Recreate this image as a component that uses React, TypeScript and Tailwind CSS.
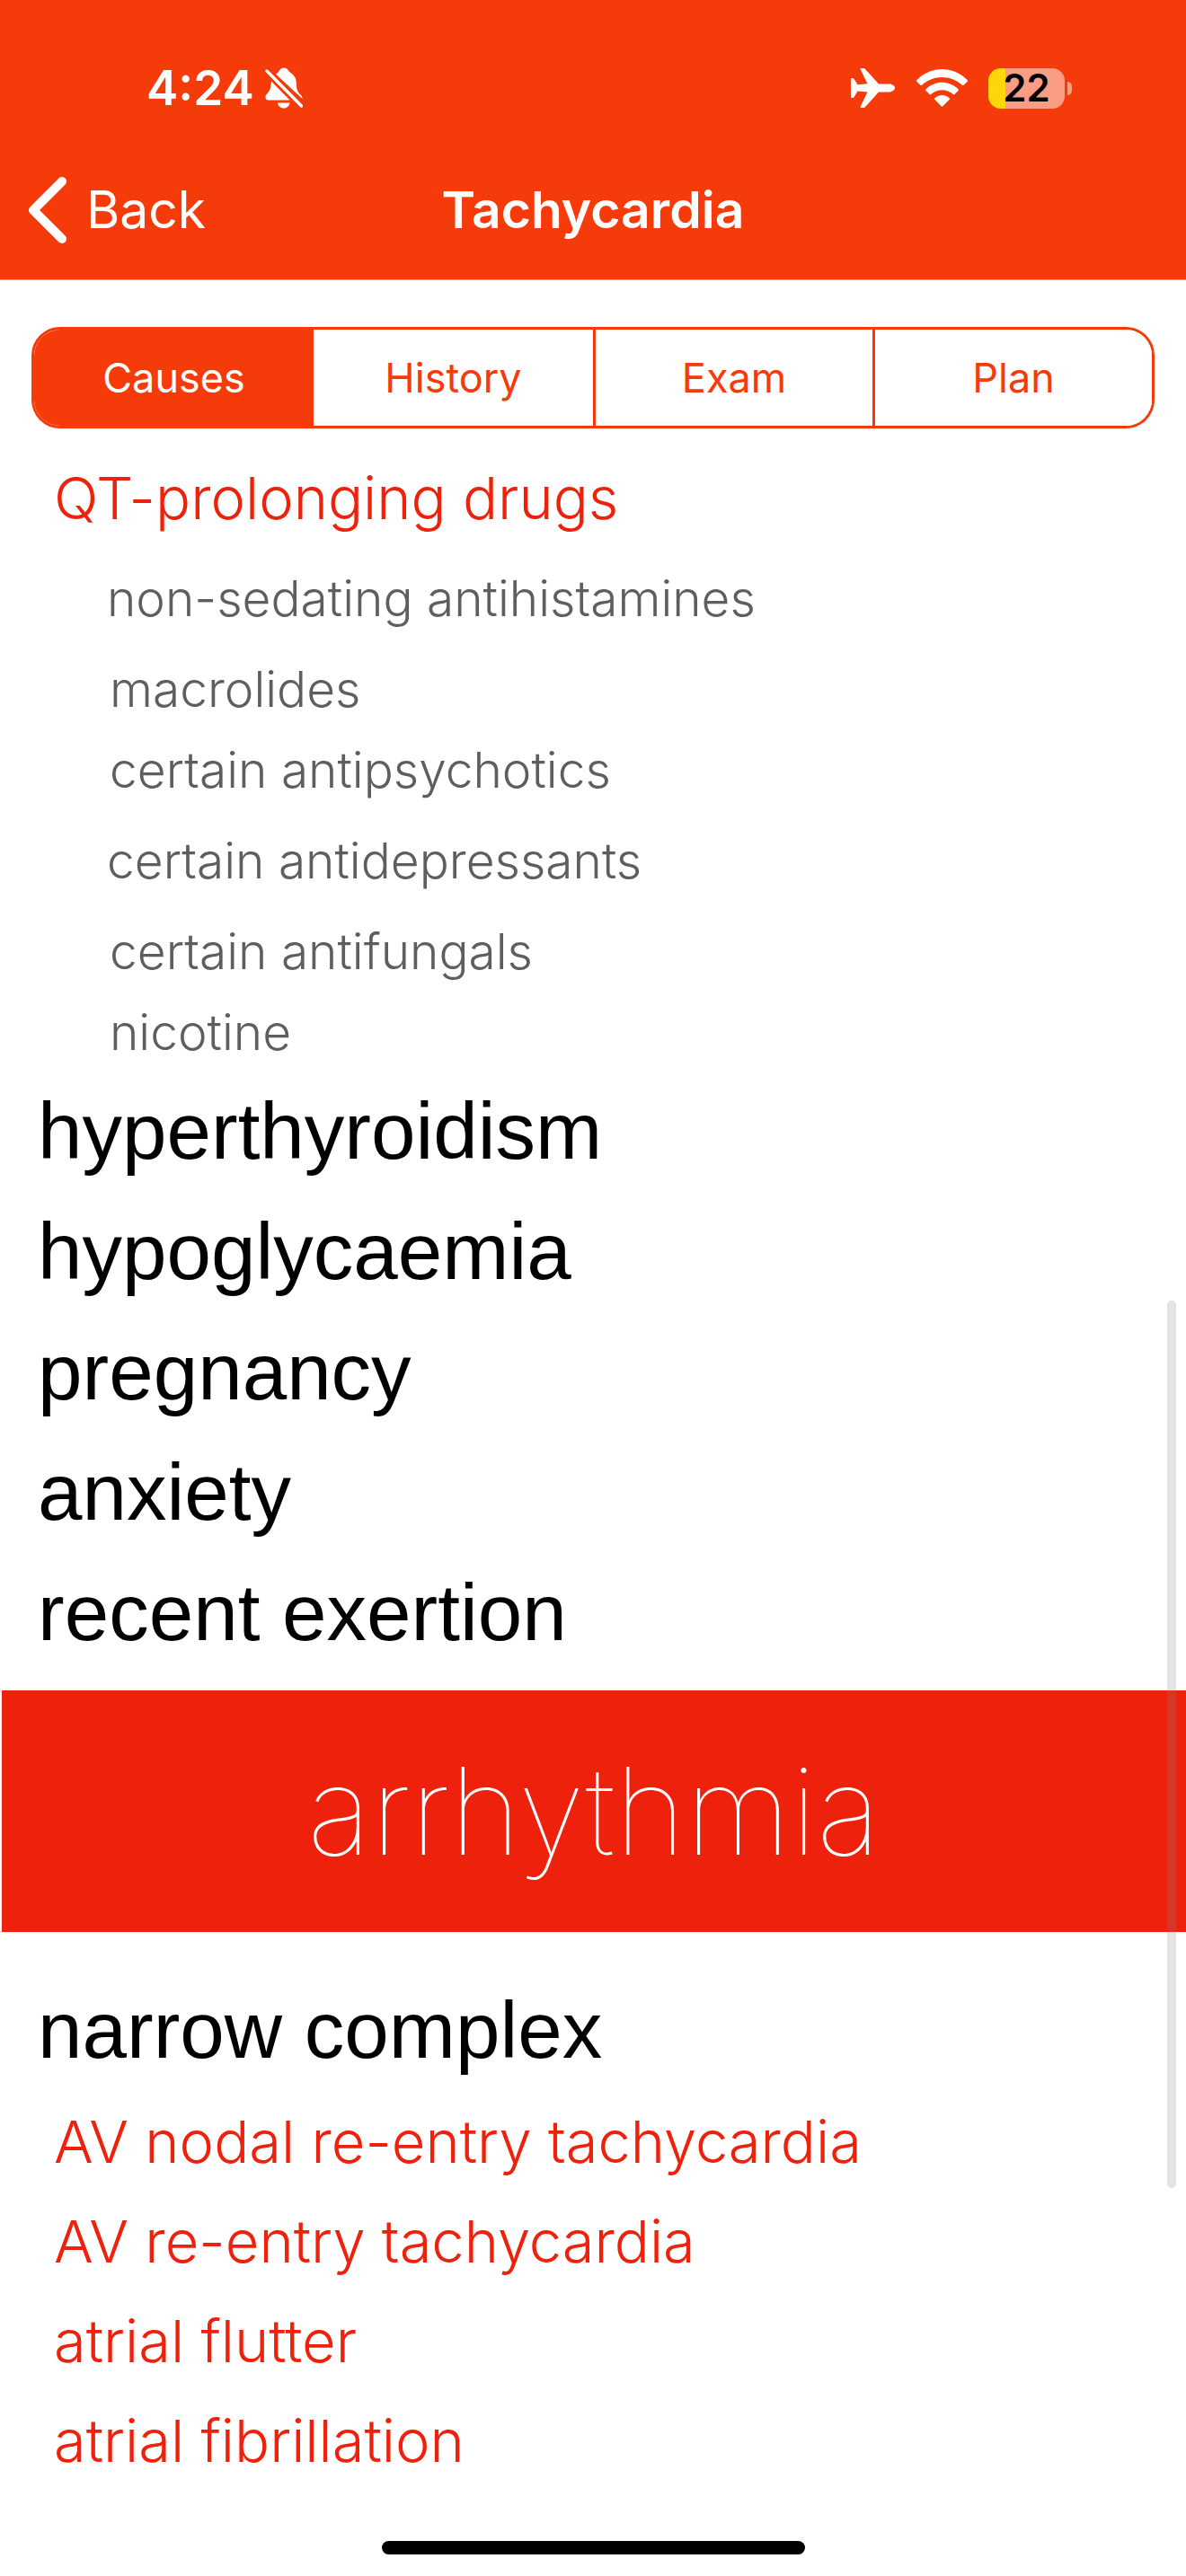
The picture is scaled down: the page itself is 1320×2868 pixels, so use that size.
import { useState } from "react";

type Tone = "heading" | "topic" | "wide" | "compact";

const rowStyles: Record<Tone, string> = {
  heading: "h-[134px] pl-[42px] text-[89px] font-['Liberation_Sans',sans-serif] text-black",
  topic: "h-[111px] pt-1 pl-[60px] text-[65px] font-light text-[#ee220c]",
  wide: "h-[112px] pt-1 pl-[119px] text-[55px] font-light text-[#5e5e5e]",
  compact: "h-[90px] pt-1 pl-[122px] text-[55px] font-light text-[#5e5e5e]",
};

function Row({ tone, children }: { tone: Tone; children: string }) {
  return (
    <li className={`flex items-center leading-none whitespace-nowrap ${rowStyles[tone]}`}>
      {children}
    </li>
  );
}

const tabs = ["Causes", "History", "Exam", "Plan"];

function StatusBar() {
  return (
    <div className="flex h-[108px] items-center justify-between pt-[88px] pr-[127px] pl-[163px] text-white">
      <div className="flex items-center gap-3">
        <span className="text-[53px] leading-none font-semibold">4:24</span>
        <svg className="h-[46px] w-[42px]" viewBox="0 0 42 46" fill="currentColor" aria-label="Silent mode">
          <path d="M12 7.5C14 6 15 5 16 3.5C17.2 1.2 18.8 .5 21 .5s3.800 1 5 3c.8 1.300 2 2.200 3.500 3.200C33.500 9.500 35 14 35 19c0 6 1.500 8.500 4.500 11.500 1.500 1.500 2 2.500 2 4.500z" />
          <path d="M7 15.500 27.500 36.500H4C1.500 36.500.3 35 .5 33c.1-2 1-3 2.500-4.500C6 25.500 6.600 21 7 15.500z" />
          <path d="M14 39.500h13.500c-.4 3.500-3.200 6-6.700 6s-6.400-2.500-6.800-6z" />
          <path d="M2 4 40.500 43" fill="none" stroke="currentColor" strokeWidth="3.400" strokeLinecap="round" />
        </svg>
      </div>
      <div className="flex items-center">
        <svg className="h-[46px] w-[49px]" viewBox="0 0 49 46" fill="currentColor" aria-label="Airplane mode">
          <path d="M0 12.500Q0 12 .8 12H2Q3 12 3.600 13L7.500 19.300 18.500 18.300 10.700 2.300Q10.200 1 11.500 1H14Q15.200 1 16 1.900L31 18.500H42C46 18.500 49 20.500 49 22.700S46 27.500 42 27.500H31L16 44Q15.200 44.900 14 44.900H11.500Q10.200 44.900 10.700 43.600L18.500 27.500 7.500 26.500 3.600 33Q3 34 2 34H.8Q0 34 0 33.500z" />
        </svg>
        <svg className="ml-6 h-[42px] w-[57px]" viewBox="0 0 57 42" fill="currentColor" aria-label="Wi-Fi">
          <path d="M.5 12C16-4 41-4 56.500 12Q57.300 13 56.500 14L52.500 17.700Q51.700 18.400 50.900 17.700C38.500 6 18.500 6 6.100 17.700Q5.300 18.400 4.500 17.700L.5 14Q-.3 13 .5 12z" />
          <path d="M10.500 22.300C20.500 12.300 36.500 12.300 46.500 22.300Q47.300 23.200 46.500 24L42.400 28Q41.700 28.600 40.900 28C34 21.500 23 21.500 16.100 28Q15.300 28.600 14.600 28L10.500 24Q9.700 23.200 10.500 22.300z" />
          <path d="M20.500 32.300C25.500 28 31.500 28 36.500 32.300Q37.300 33.200 36.500 34.100L29.300 41.300Q28.500 42 27.700 41.300L20.500 34.100Q19.700 33.200 20.500 32.300z" />
        </svg>
        <div className="ml-[23px] flex h-[45px] w-[85px] items-center justify-center rounded-[14px] bg-linear-to-r from-[#ffd60a] from-[19px] to-[#fb9c84] to-[19px] text-[42px] leading-none font-semibold text-black">
          22
        </div>
        <div className="ml-[3px] h-[15px] w-[5px] rounded-r-full bg-[#fb9c84]" />
      </div>
    </div>
  );
}

export default function App() {
  const [active, setActive] = useState("Causes");

  return (
    <div className="relative flex min-h-screen flex-col bg-white font-['Inter',sans-serif]">
      <header className="border-b border-[#c9b5ae] bg-[#f53b0a]">
        <StatusBar />
        <nav className="mt-[66px] mb-[18px] grid h-[119px] grid-cols-[1fr_auto_1fr] items-center px-[31px] text-[57px] leading-none text-white">
          <button type="button" className="flex items-center gap-[22px] justify-self-start">
            <svg className="h-[74px] w-[43px]" viewBox="0 0 43 74" fill="none" stroke="currentColor" strokeWidth="10" strokeLinecap="round" strokeLinejoin="round" aria-hidden="true">
              <path d="M38 5 6 37 38 69" />
            </svg>
            Back
          </button>
          <h1 className="font-semibold">Tachycardia</h1>
        </nav>
      </header>

      <div className="px-[35px] pt-[52px]">
        <div role="tablist" className="grid h-[113px] grid-cols-4 overflow-hidden rounded-[32px] border-3 border-[#f53b0a]">
          {tabs.map((tab, index) => (
            <button
              key={tab}
              type="button"
              role="tab"
              aria-selected={tab === active}
              onClick={() => setActive(tab)}
              className={`border-[#f53b0a] text-[45px] leading-none ${index > 1 ? "border-l-3" : ""} ${
                tab === active ? "bg-[#f53b0a] text-white" : "bg-white text-[#f53b0a]"
              }`}
            >
              {tab}
            </button>
          ))}
        </div>
      </div>

      <main className="pt-5">
        <ul>
          <Row tone="topic">QT-prolonging drugs</Row>
          <Row tone="wide">non-sedating antihistamines</Row>
          <Row tone="compact">macrolides</Row>
          <Row tone="compact">certain antipsychotics</Row>
          <Row tone="wide">certain antidepressants</Row>
          <Row tone="compact">certain antifungals</Row>
          <Row tone="compact">nicotine</Row>
          <Row tone="heading">hyperthyroidism</Row>
          <Row tone="heading">hypoglycaemia</Row>
          <Row tone="heading">pregnancy</Row>
          <Row tone="heading">anxiety</Row>
          <Row tone="heading">recent exertion</Row>
        </ul>
        <h2 className="mt-5 ml-0.5 flex h-[269px] items-center justify-center bg-[#ee220c] text-[135px] leading-none font-thin text-white">
          arrhythmia
        </h2>
        <ul className="mt-[42px]">
          <Row tone="heading">narrow complex</Row>
          <Row tone="topic">AV nodal re-entry tachycardia</Row>
          <Row tone="topic">AV re-entry tachycardia</Row>
          <Row tone="topic">atrial flutter</Row>
          <Row tone="topic">atrial fibrillation</Row>
        </ul>
      </main>

      <div className="mt-auto flex justify-center pt-12 pb-6">
        <div className="h-[15px] w-[471px] rounded-full bg-black" />
      </div>

      <div className="absolute top-[1448px] right-[11px] h-[988px] w-[10px] rounded-full bg-[#808080]/22" />
    </div>
  );
}
